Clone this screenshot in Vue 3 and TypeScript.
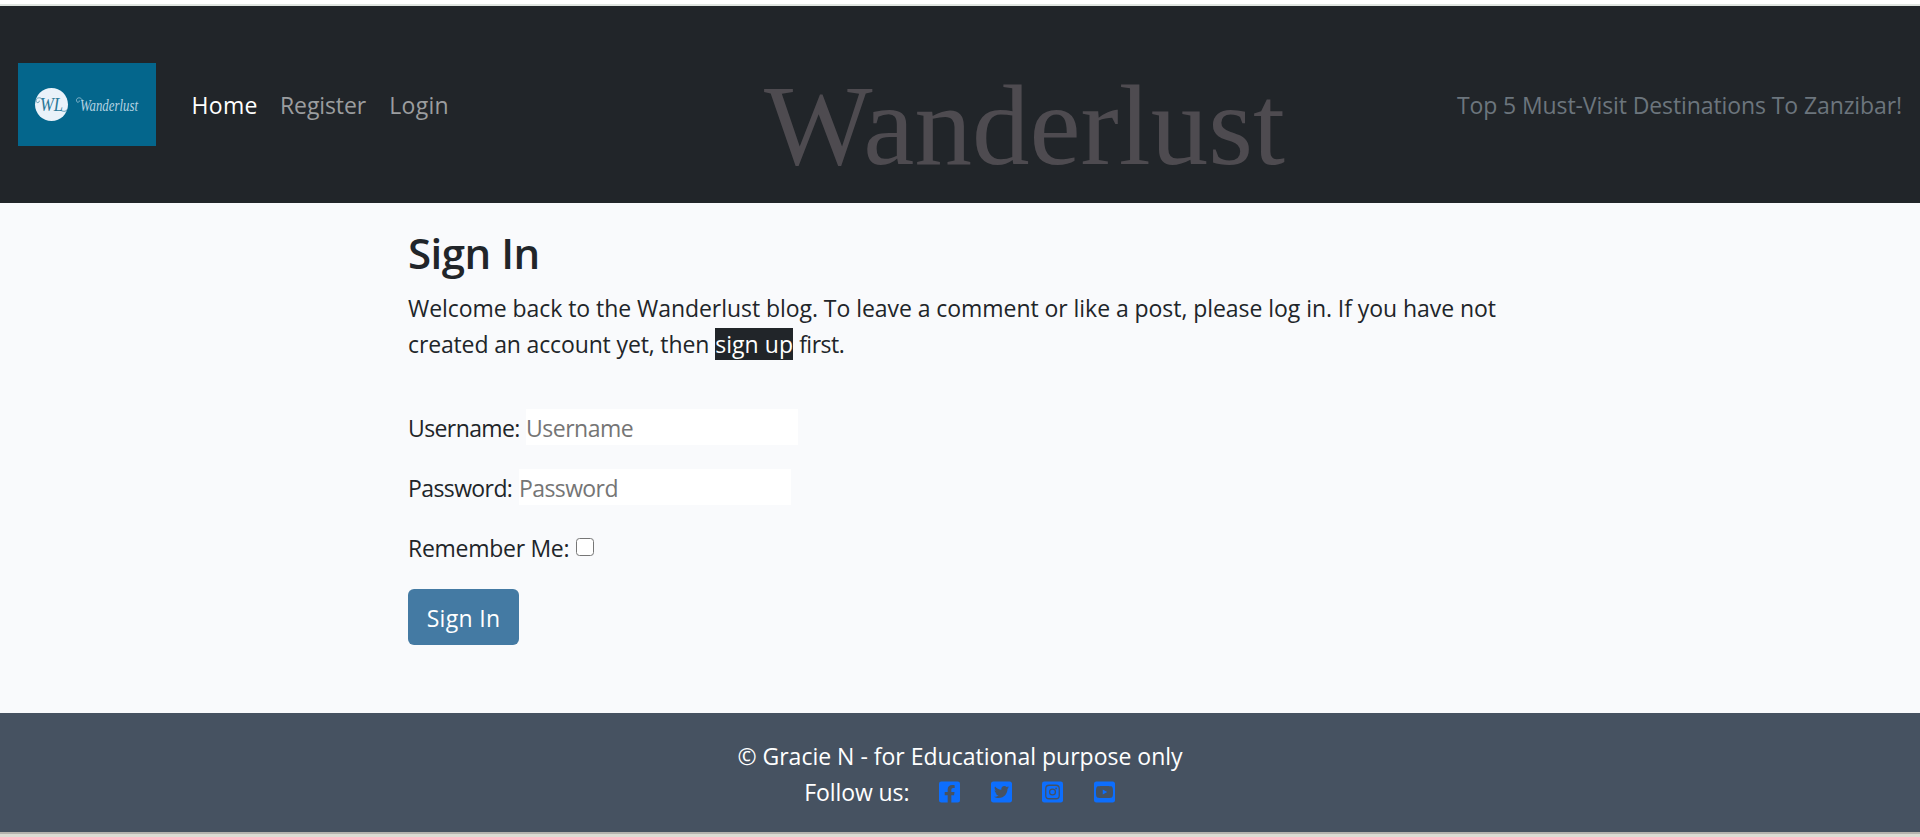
<script setup lang="ts">
import { ref } from 'vue'

interface NavLink {
  label: string
  key: string
  active?: boolean
}

const links: NavLink[] = [
  { label: 'Home', key: 'home', active: true },
  { label: 'Register', key: 'register' },
  { label: 'Login', key: 'login' },
]

const username = ref('')
const password = ref('')
const remember = ref(false)
</script>

<template>
  <div class="page">
    <header class="navbar">
      <a class="brand" aria-label="Wanderlust">
        <svg viewBox="0 0 138 83" width="138" height="83">
          <rect width="138" height="83" fill="#04668c" />
          <circle cx="33.5" cy="41.5" r="16.5" fill="#eaf2fa" />
          <g class="script dark">
            <text x="22" y="48" textLength="23" lengthAdjust="spacingAndGlyphs" font-size="18">WL</text>
            <path d="M24.500 37c-1.500-3.500-7-2.500-6.500 1 .3 2.300 3.500 2 3.300-.3M43 47.500c3 1.500 5.500 1 6.500-1.500" />
          </g>
          <g class="script light">
            <text x="62" y="48" textLength="58" lengthAdjust="spacingAndGlyphs" font-size="17">Wanderlust</text>
            <path d="M64.500 37.500c-1.500-4-6.500-3.200-6 .3.400 2.200 3.200 1.700 2.800-.3" />
          </g>
        </svg>
      </a>
      <nav class="links">
        <a v-for="l in links" :key="l.key" :class="['link', l.key, { active: l.active }]">{{ l.label }}</a>
      </nav>
      <div class="title">Wanderlust</div>
      <span class="tagline">Top 5 Must-Visit Destinations To Zanzibar!</span>
    </header>

    <main class="content">
      <h1>Sign In</h1>
      <p class="intro">
        <span class="line-a">Welcome back to the Wanderlust blog. To leave a comment or like a post, please log in. If you have not</span><br />
        <span class="line-b">created an account yet, then</span>&nbsp;<a class="signup">sign up</a>&nbsp;<span class="line-c">first.</span>
      </p>
      <form @submit.prevent>
        <div class="row">
          <label class="l-user" for="user">Username:</label>
          <input id="user" v-model="username" class="field user" type="text" placeholder="Username" />
        </div>
        <div class="row">
          <label class="l-pass" for="pass">Password:</label>
          <input id="pass" v-model="password" class="field pass" type="password" placeholder="Password" />
        </div>
        <div class="row">
          <label class="l-remember" for="remember">Remember Me:</label>
          <input id="remember" v-model="remember" class="check" type="checkbox" />
        </div>
        <button class="submit" type="submit">Sign In</button>
      </form>
    </main>

    <footer class="footer">
      <div class="copy">© Gracie N - for Educational purpose only</div>
      <div class="follow">
        <span class="follow-label">Follow us:</span>
        <svg viewBox="0 0 448 512"><path d="M400 32H48A48 48 0 0 0 0 80v352a48 48 0 0 0 48 48h137.250V327.690h-63V256h63v-54.640c0-62.150 37-96.480 93.670-96.480 27.140 0 55.520 4.840 55.520 4.840v61h-31.270c-30.810 0-40.420 19.120-40.420 38.730V256h68.780l-11 71.690h-57.780V480H400a48 48 0 0 0 48-48V80a48 48 0 0 0-48-48z" /></svg>
        <svg viewBox="0 0 448 512"><path d="M400 32H48C21.500 32 0 53.500 0 80v352c0 26.500 21.500 48 48 48h352c26.500 0 48-21.500 48-48V80c0-26.500-21.500-48-48-48zm-48.900 158.800c.2 2.800.2 5.700.2 8.500 0 86.700-66 186.600-186.600 186.600-37.200 0-71.700-10.800-100.700-29.400 5.300.6 10.400.8 15.800.8 30.700 0 58.900-10.400 81.400-28-28.800-.6-53-19.500-61.300-45.500 10.100 1.500 19.200 1.500 29.600-1.200-30-6.100-52.500-32.500-52.500-64.400v-.8c8.700 4.900 18.900 7.900 29.600 8.300a65.447 65.447 0 0 1-29.200-54.600c0-12.200 3.200-23.400 8.900-33.100 32.300 39.800 80.800 65.800 135.200 68.600-9.300-44.500 24-80.600 64-80.600 18.900 0 35.900 7.900 47.900 20.700 14.800-2.800 29-8.300 41.600-15.800-4.900 15.200-15.200 28-28.800 36.100 13.200-1.400 26-5.100 37.800-10.200-8.900 13.100-20.100 24.700-32.900 34z" /></svg>
        <svg viewBox="0 0 448 512">
          <rect y="32" width="448" height="448" rx="48" />
          <g class="cut">
            <rect x="80" y="112" width="288" height="288" rx="72" />
            <circle cx="224" cy="256" r="63" />
          </g>
          <circle class="dot" cx="301" cy="180" r="18" />
        </svg>
        <svg viewBox="0 0 448 512"><path d="M186.800 202.100l95.200 54.100-95.200 54.100V202.100zM448 80v352c0 26.500-21.500 48-48 48H48c-26.500 0-48-21.500-48-48V80c0-26.500 21.500-48 48-48h352c26.500 0 48 21.500 48 48zm-42 176.300s0-59.600-7.600-88.200c-4.200-15.800-16.500-28.200-32.200-32.400C337.900 128 224 128 224 128s-113.900 0-142.200 7.700c-15.700 4.200-28 16.600-32.200 32.400-7.600 28.500-7.600 88.200-7.600 88.200s0 59.600 7.600 88.200c4.200 15.800 16.500 27.700 32.200 31.900C110.100 384 224 384 224 384s113.900 0 142.200-7.700c15.700-4.200 28-16.100 32.200-31.900 7.600-28.500 7.600-88.100 7.600-88.100z" /></svg>
      </div>
    </footer>
  </div>
</template>

<style>
body {
  margin: 0;
  background: #fff;
}
</style>

<style scoped>
.page {
  box-sizing: border-box;
  height: 837px;
  padding-top: 4px;
  overflow: hidden;
  display: flex;
  flex-direction: column;
  background: linear-gradient(#fff 0 4px, #dfe5e0 4px 6px, #f9fafc 6px 832px, #b5b3ae 832px 834px, #dddcd4 834px);
  color: #212529;
  font: 400 23px/36px "Open Sans", "Noto Sans", sans-serif;
}
.navbar {
  box-sizing: border-box;
  margin-top: 2px;
  height: 197px;
  flex: none;
  display: flex;
  align-items: center;
  padding: 0 18px;
  background: #212529;
  white-space: nowrap;
}
.brand,
.brand svg {
  display: block;
}
.script text {
  font-family: "Liberation Serif", serif;
  font-style: italic;
}
.script path {
  fill: none;
  stroke-width: 0.7;
}
.dark text { fill: #2a7898; }
.dark path { stroke: #2a7898; }
.light text { fill: #b4d3e2; }
.light path { stroke: #b4d3e2; }
.links {
  display: flex;
  width: 572.500px;
  margin-left: 35.500px;
}
.link { color: #9b9d9f; }
.link.active { color: #fff; }
.home { width: 88.500px; letter-spacing: 0.3px; }
.register { width: 109.200px; letter-spacing: -0.1px; }
.login { letter-spacing: 0.3px; }
.title {
  font: 400 115px/120px "Liberation Serif", serif;
  color: #4e4b50;
  padding-top: 43px;
}
.tagline {
  margin-left: auto;
  color: #6c757d;
  letter-spacing: -0.1px;
}
.content {
  box-sizing: border-box;
  width: 1104px;
  height: 510px;
  flex: none;
  margin: 0 auto;
  padding-top: 24px;
}
h1 {
  margin: 0 0 12px;
  font-size: 42px;
  font-weight: 600;
  line-height: 51px;
  letter-spacing: -0.5px;
}
.intro {
  margin: 0 0 47px;
  white-space: nowrap;
}
.line-a { letter-spacing: -0.055px; }
.line-b { letter-spacing: -0.14px; }
.line-c { letter-spacing: -0.5px; }
.signup {
  background: #212529;
  color: #fff;
  letter-spacing: 0.07px;
}
.row {
  display: flex;
  align-items: center;
  height: 36px;
  margin-bottom: 24px;
}
label { white-space: nowrap; padding-top: 1px; }
.l-user { width: 118px; letter-spacing: -0.6px; }
.l-pass { width: 111px; letter-spacing: -0.6px; }
.l-remember { width: 168px; letter-spacing: -0.28px; }
.field {
  box-sizing: border-box;
  width: 272px;
  height: 36px;
  border: 0;
  padding: 1px 0 0;
  background: #fff;
  font: inherit;
  color: #212529;
}
.field::placeholder { color: #757575; opacity: 1; }
.user { letter-spacing: -0.5px; }
.pass { letter-spacing: -0.6px; }
.check {
  appearance: none;
  box-sizing: border-box;
  width: 18px;
  height: 18px;
  margin: 0;
  border: 1.500px solid #767676;
  border-radius: 3.500px;
  background: #fff;
}
.submit {
  display: block;
  width: 111px;
  height: 56px;
  padding: 2px 0 0;
  border: 0;
  border-radius: 6px;
  background: #447aa3;
  color: #fff;
  font: inherit;
  letter-spacing: 0.3px;
}
.footer {
  box-sizing: border-box;
  height: 119px;
  flex: none;
  padding-top: 25px;
  background: #465261;
  color: #fff;
  text-align: center;
}
.follow {
  display: flex;
  align-items: center;
  gap: 30.700px;
  padding-left: 804.300px;
}
.follow-label { width: 104px; text-align: left; white-space: nowrap; letter-spacing: -0.1px; }
.follow svg {
  width: 21px;
  height: 24px;
  flex: none;
  fill: #0d6efd;
}
.follow .cut {
  fill: none;
  stroke: #465261;
  stroke-width: 27;
}
.follow .dot { fill: #465261; }
</style>
